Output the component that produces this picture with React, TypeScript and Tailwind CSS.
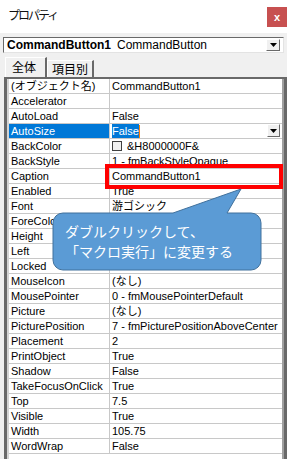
import React from "react";

type Row = {
  name: string;
  value: string;
  swatch?: boolean;
};

// ForeColor / Height / Left values sit under the callout, so they are left blank
const rows: Row[] = [
  { name: "(オブジェクト名)", value: "CommandButton1" },
  { name: "Accelerator", value: "" },
  { name: "AutoLoad", value: "False" },
  { name: "AutoSize", value: "False" },
  { name: "BackColor", value: "&H8000000F&", swatch: true },
  { name: "BackStyle", value: "1 - fmBackStyleOpaque" },
  { name: "Caption", value: "CommandButton1" },
  { name: "Enabled", value: "True" },
  { name: "Font", value: "游ゴシック" },
  { name: "ForeColor", value: "" },
  { name: "Height", value: "" },
  { name: "Left", value: "" },
  { name: "Locked", value: "True" },
  { name: "MouseIcon", value: "(なし)" },
  { name: "MousePointer", value: "0 - fmMousePointerDefault" },
  { name: "Picture", value: "(なし)" },
  { name: "PicturePosition", value: "7 - fmPicturePositionAboveCenter" },
  { name: "Placement", value: "2" },
  { name: "PrintObject", value: "True" },
  { name: "Shadow", value: "False" },
  { name: "TakeFocusOnClick", value: "True" },
  { name: "Top", value: "7.5" },
  { name: "Visible", value: "True" },
  { name: "Width", value: "105.75" },
  { name: "WordWrap", value: "False" },
];

const DropButton = ({ className }: { className: string }) => (
  <div
    className={`flex items-center justify-center bg-[#f0f0f0] border border-t-white border-l-white border-r-[#696969] border-b-[#696969] ${className}`}
  >
    <svg width="7" height="4" viewBox="0 0 7 4">
      <polygon points="0,0 7,0 3.5,4" fill="#000" />
    </svg>
  </div>
);

const PropertyRow = ({ row }: { row: Row }) => {
  const selected = row.name === "AutoSize";
  return (
    <div className="grid grid-cols-[101px_1fr] h-[15px] border-b border-[#c8c8c8] text-[11px] leading-[14px]">
      <div
        className={`pl-[2px] border-r border-[#c8c8c8] whitespace-nowrap overflow-hidden ${
          selected ? "bg-[#0078d7] text-white" : "text-black"
        }`}
      >
        {row.name}
      </div>
      <div className="relative pl-[2px] flex items-center whitespace-nowrap overflow-hidden text-black">
        {selected ? (
          <>
            <span className="bg-[#0078d7] text-white">{row.value}</span>
            <span className="w-px h-[13px] bg-[#ff8000]" />
            <DropButton className="absolute right-[2px] top-0 w-[13px] h-[13px]" />
          </>
        ) : (
          <>
            {row.swatch && (
              <span className="mr-[5px] w-[10px] h-[10px] border border-[#404040] bg-[#f0f0f0]" />
            )}
            <span>{row.value}</span>
          </>
        )}
      </div>
    </div>
  );
};

export default function App() {
  return (
    <div className="relative w-[287px] h-[459px] overflow-hidden bg-[#f0f0f0] font-['Liberation_Sans','Noto_Sans_CJK_JP',sans-serif] flex flex-col">
      {/* title bar */}
      <div className="h-[33px] bg-white flex items-start justify-between shrink-0">
        <span className="pl-[8px] pt-[6px] text-[12px] tracking-[-2px] font-['Noto_Sans_CJK_JP',sans-serif] text-[#111]">
          プロパティ
        </span>
        <div className="mt-[7px] w-[20px] h-[20px] bg-[#c75050] flex items-center justify-center text-white text-[11px] font-bold leading-none">
          x
        </div>
      </div>

      {/* object combo */}
      <div className="mt-[4px] mx-[3px] h-[16px] shrink-0 flex items-center bg-white border border-t-[#696969] border-l-[#696969] border-r-[#e3e3e3] border-b-[#e3e3e3] relative">
        <span className="pl-[3px] text-[12px] font-bold">CommandButton1</span>
        <span className="pl-[6px] text-[12px]">CommandButton</span>
        <DropButton className="absolute right-[3px] top-[1px] w-[14px] h-[12px]" />
      </div>

      {/* tabs */}
      <div className="mt-[4px] h-[20px] shrink-0 flex items-end pl-[5px] text-[12px] font-['Noto_Sans_CJK_JP',sans-serif]">
        <div className="h-[20px] w-[42px] border-t border-l border-white border-r-2 border-r-[#696969] pl-[6px] leading-[17px]">
          全体
        </div>
        <div className="h-[17px] w-[47px] border-t border-l border-white border-r-2 border-r-[#696969] pl-[4px] leading-[16px]">
          項目別
        </div>
      </div>

      {/* property grid */}
      <div className="ml-[4px] w-[283px] h-[400px] shrink-0 border-t-2 border-l-[3px] border-r-[3px] border-[#696969]">
        <div className="h-full bg-white border-l-2 border-r-2 border-l-[#d4d4d4] border-r-[#a0a0a0]">
          {rows.map((row) => (
            <PropertyRow key={row.name} row={row} />
          ))}
        </div>
      </div>

      {/* annotation: caption highlight */}
      <div className="absolute left-[105px] top-[164px] w-[178px] h-[25px] border-4 border-[#ff0000]" />

      {/* annotation: callout */}
      <svg
        className="absolute left-[52px] top-[188px]"
        width="212"
        height="84"
        viewBox="0 0 212 84"
      >
        <path
          d="M 11 25 H 121 L 189 1 L 175 25 H 199 A 10 10 0 0 1 209 35 V 72 A 10 10 0 0 1 199 82 H 11 A 10 10 0 0 1 1 72 V 35 A 10 10 0 0 1 11 25 Z"
          fill="#5b9bd5"
          stroke="#41719c"
          strokeWidth="1"
        />
      </svg>
      <div className="absolute left-[65px] top-[221px] text-white text-[14px] leading-[20px] font-['Noto_Sans_CJK_JP',sans-serif] whitespace-nowrap">
        <div>ダブルクリックして、</div>
        <div>「マクロ実行」に変更する</div>
      </div>
    </div>
  );
}
